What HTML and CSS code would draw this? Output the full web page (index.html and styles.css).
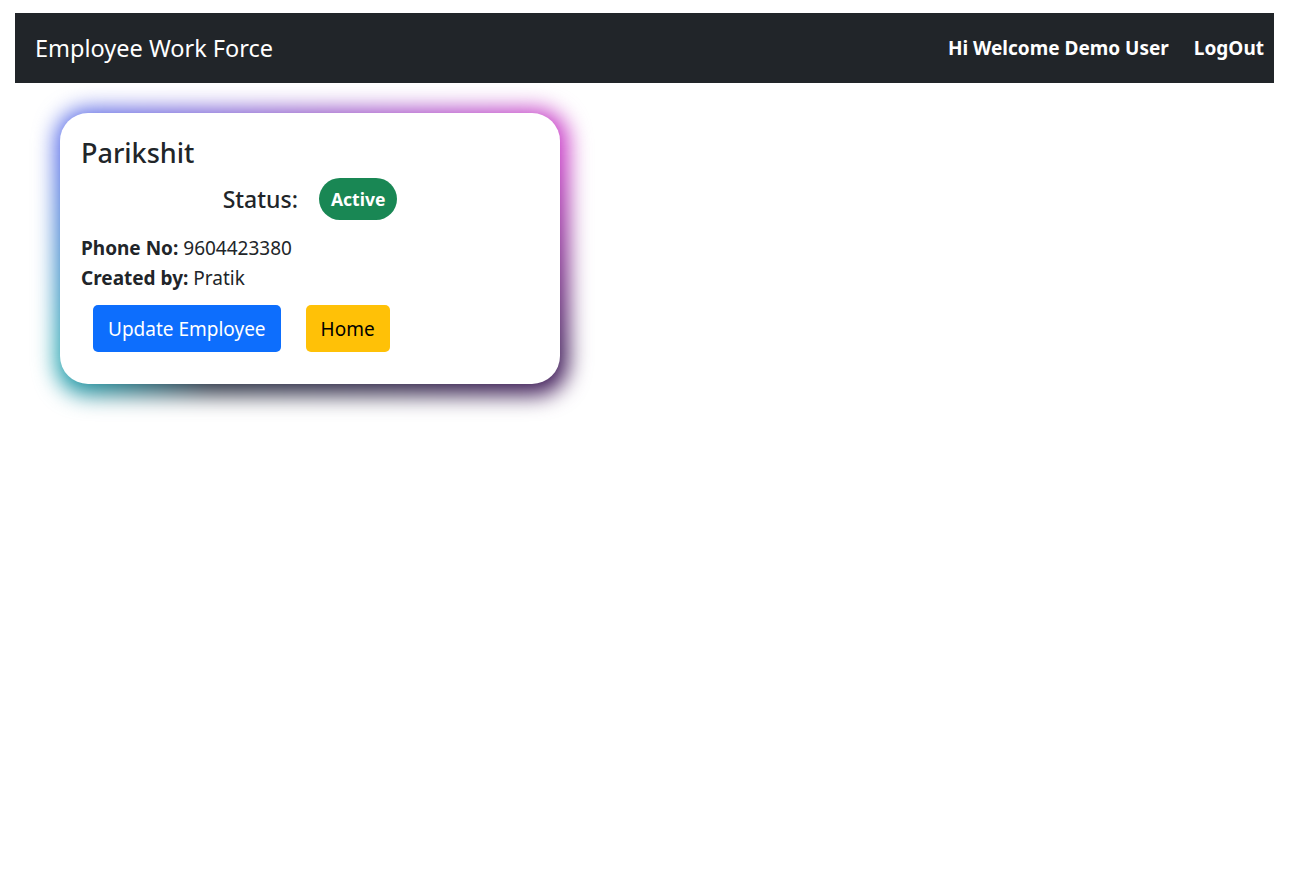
FILE: index.html
```html
<!DOCTYPE html>
<html lang="en">
<head>
<meta charset="utf-8">
<title>Employee Work Force</title>
<link rel="stylesheet" href="styles.css">
</head>
<body>
<div class="page">
  <nav class="navbar">
    <span class="brand">Employee Work Force</span>
    <div class="nav-right">
      <span class="nav-item">Hi Welcome Demo User</span>
      <span class="nav-item">LogOut</span>
    </div>
  </nav>
  <main class="main">
    <div class="card">
      <div class="glow" aria-hidden="true"></div>
      <h4 class="name">Parikshit</h4>
      <div class="status-row">
        <h5 class="status-label">Status:</h5>
        <span class="badge">Active</span>
      </div>
      <p class="info"><b>Phone No:</b> 9604423380</p>
      <p class="info"><b>Created by:</b> Pratik</p>
      <div class="actions">
        <button class="btn btn-primary">Update Employee</button>
        <button class="btn btn-warning">Home</button>
      </div>
    </div>
  </main>
</div>
</body>
</html>
```
FILE: styles.css
```css
* { box-sizing: border-box; }
html { background: #fff; }
body {
  margin: 0;
  min-height: 100vh;
  font-family: "Noto Sans", "Open Sans", sans-serif;
  color: #212529;
  font-size: 19px;
}
.page { padding: 13px 15px; min-height: 100vh; }
.navbar {
  height: 70px;
  background: #212529;
  display: flex;
  align-items: center;
  justify-content: space-between;
  padding: 0 10px 0 20px;
}
.brand { color: #fff; font-size: 23.5px; }
.nav-right { display: flex; gap: 25px; }
.nav-item { color: #fff; font-weight: 700; font-size: 19px; }
.main { padding: 30px 0 0 45px; }
.card {
  position: relative;
  width: 500px;
  background: #fff;
  border-radius: 28px;
  padding: 24px 21px 32px;
}
.glow {
  position: absolute;
  top: -4px; left: -4px; right: -8px; bottom: -11px;
  border-radius: 32px;
  filter: blur(11px);
  z-index: -1;
}
.glow::before, .glow::after {
  content: "";
  position: absolute;
  inset: 0;
  border-radius: inherit;
}
.glow::before { background: linear-gradient(to right, #4a64e8, #8a4cc4 50%, #c834c4); }
.glow::after {
  background: linear-gradient(to right, #1fa8b4, #2a3344 30%, #32284a 65%, #3e1758);
  -webkit-mask-image: linear-gradient(to bottom, transparent 15%, #000 85%);
  mask-image: linear-gradient(to bottom, transparent 15%, #000 85%);
}
.name { margin: 0; font-size: 27px; font-weight: 500; line-height: 1.2; }
.status-row {
  display: flex;
  justify-content: center;
  align-items: center;
  gap: 21px;
  margin-top: 9px;
}
.status-label { margin: 0; font-size: 23px; font-weight: 500; line-height: 1.2; }
.badge {
  background: #198754;
  color: #fff;
  font-weight: 700;
  font-size: 17.5px;
  border-radius: 21px;
  height: 42px;
  padding: 0 12px;
  display: inline-flex;
  align-items: center;
}
.info { margin: 0; line-height: 30px; font-size: 19px; }
.info:first-of-type { margin-top: 13px; }
.actions { display: flex; gap: 25px; padding-left: 12px; margin-top: 12px; }
.btn {
  font-family: inherit;
  font-size: 19px;
  border: none;
  border-radius: 5px;
  height: 47px;
  padding: 0 15px;
}
.btn-primary { background: #0d6efd; color: #fff; }
.btn-warning { background: #ffc107; color: #000; }
```
